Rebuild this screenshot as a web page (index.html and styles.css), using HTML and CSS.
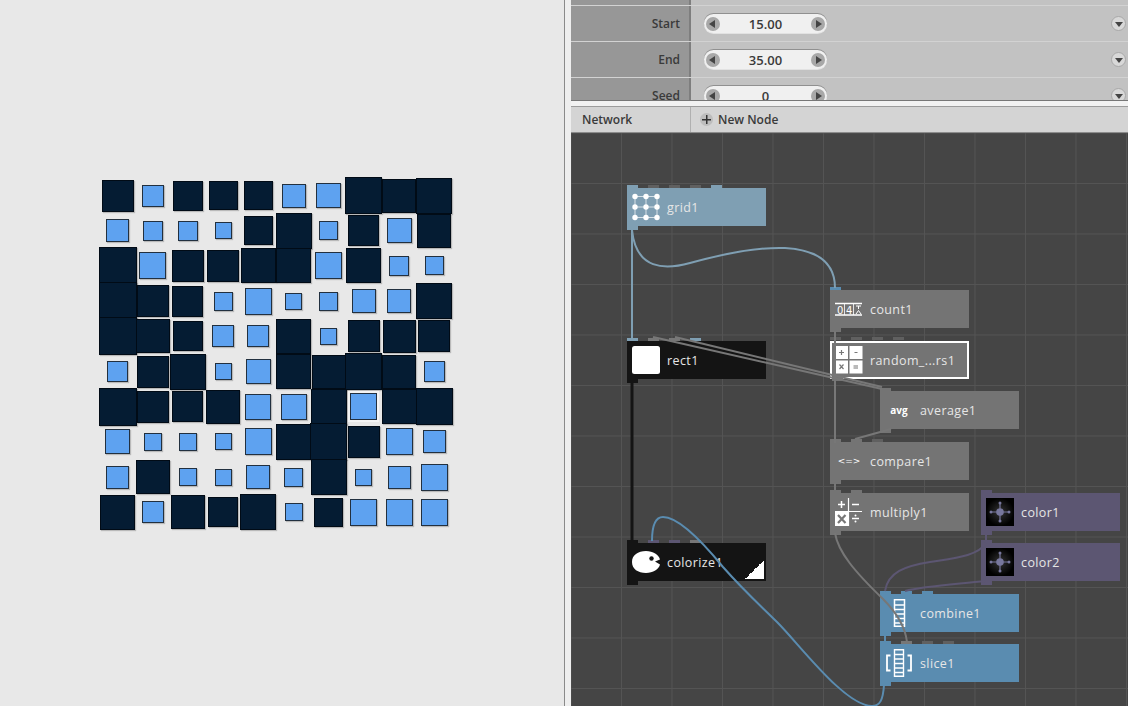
FILE: index.html
```html
<!DOCTYPE html>
<html lang="en">
<head>
    <meta charset="UTF-8">
    <title>NodeBox</title>
    <link rel="stylesheet" href="styles.css">
</head>
<body>

    <!-- Rendered output -->
    <div class="viewer">
        <div class="squares">
            <i class="sq dark" style="--s:32px"></i><i class="sq light" style="--s:22px"></i><i class="sq dark" style="--s:30px"></i><i class="sq dark" style="--s:29px"></i><i class="sq dark" style="--s:29px"></i><i class="sq light" style="--s:24px"></i><i class="sq light" style="--s:25px"></i><i class="sq dark" style="--s:37px"></i><i class="sq dark" style="--s:34px"></i><i class="sq dark" style="--s:36px"></i>
            <i class="sq light" style="--s:23px"></i><i class="sq light" style="--s:20px"></i><i class="sq light" style="--s:20px"></i><i class="sq light" style="--s:17px"></i><i class="sq dark" style="--s:29px"></i><i class="sq dark" style="--s:36px"></i><i class="sq light" style="--s:19px"></i><i class="sq dark" style="--s:31px"></i><i class="sq light" style="--s:25px"></i><i class="sq dark" style="--s:34px"></i>
            <i class="sq dark" style="--s:38px"></i><i class="sq light" style="--s:27px"></i><i class="sq dark" style="--s:32px"></i><i class="sq dark" style="--s:32px"></i><i class="sq dark" style="--s:35px"></i><i class="sq dark" style="--s:35px"></i><i class="sq light" style="--s:27px"></i><i class="sq dark" style="--s:35px"></i><i class="sq light" style="--s:20px"></i><i class="sq light" style="--s:19px"></i>
            <i class="sq dark" style="--s:38px"></i><i class="sq dark" style="--s:32px"></i><i class="sq dark" style="--s:31px"></i><i class="sq light" style="--s:19px"></i><i class="sq light" style="--s:27px"></i><i class="sq light" style="--s:17px"></i><i class="sq light" style="--s:19px"></i><i class="sq light" style="--s:24px"></i><i class="sq light" style="--s:24px"></i><i class="sq dark" style="--s:36px"></i>
            <i class="sq dark" style="--s:38px"></i><i class="sq dark" style="--s:34px"></i><i class="sq dark" style="--s:30px"></i><i class="sq light" style="--s:22px"></i><i class="sq light" style="--s:22px"></i><i class="sq dark" style="--s:35px"></i><i class="sq light" style="--s:17px"></i><i class="sq dark" style="--s:32px"></i><i class="sq dark" style="--s:33px"></i><i class="sq dark" style="--s:32px"></i>
            <i class="sq light" style="--s:21px"></i><i class="sq dark" style="--s:32px"></i><i class="sq dark" style="--s:36px"></i><i class="sq light" style="--s:17px"></i><i class="sq light" style="--s:25px"></i><i class="sq dark" style="--s:35px"></i><i class="sq dark" style="--s:34px"></i><i class="sq dark" style="--s:37px"></i><i class="sq dark" style="--s:34px"></i><i class="sq light" style="--s:21px"></i>
            <i class="sq dark" style="--s:38px"></i><i class="sq dark" style="--s:32px"></i><i class="sq dark" style="--s:31px"></i><i class="sq dark" style="--s:34px"></i><i class="sq light" style="--s:26px"></i><i class="sq light" style="--s:26px"></i><i class="sq dark" style="--s:36px"></i><i class="sq light halo" style="--s:27px"></i><i class="sq dark" style="--s:35px"></i><i class="sq dark" style="--s:37px"></i>
            <i class="sq light" style="--s:25px"></i><i class="sq light" style="--s:18px"></i><i class="sq light" style="--s:18px"></i><i class="sq light" style="--s:17px"></i><i class="sq light" style="--s:27px"></i><i class="sq dark" style="--s:36px"></i><i class="sq dark" style="--s:37px"></i><i class="sq dark" style="--s:32px"></i><i class="sq light" style="--s:27px"></i><i class="sq light" style="--s:23px"></i>
            <i class="sq light" style="--s:23px"></i><i class="sq dark" style="--s:34px"></i><i class="sq light" style="--s:18px"></i><i class="sq light" style="--s:17px"></i><i class="sq light" style="--s:24px"></i><i class="sq light" style="--s:19px"></i><i class="sq dark" style="--s:36px"></i><i class="sq light" style="--s:17px"></i><i class="sq light" style="--s:23px"></i><i class="sq light" style="--s:27px"></i>
            <i class="sq dark" style="--s:35px"></i><i class="sq light" style="--s:22px"></i><i class="sq dark" style="--s:34px"></i><i class="sq dark" style="--s:30px"></i><i class="sq dark" style="--s:36px"></i><i class="sq light" style="--s:18px"></i><i class="sq dark" style="--s:29px"></i><i class="sq light" style="--s:27px"></i><i class="sq light" style="--s:27px"></i><i class="sq light" style="--s:27px"></i>
        </div>
    </div>

    <div class="side">
        <!-- Parameters -->
        <div class="params">
            <div class="param-row">
                <div class="param-label">Amount</div>
                <div class="param-value"><span class="expand"></span></div>
            </div>
            <div class="param-row">
                <div class="param-label">Start</div>
                <div class="param-value">
                    <div class="stepper"><span class="arrow left"></span><span class="num">15.00</span><span class="arrow right"></span></div>
                    <span class="expand"></span>
                </div>
            </div>
            <div class="param-row">
                <div class="param-label">End</div>
                <div class="param-value">
                    <div class="stepper"><span class="arrow left"></span><span class="num">35.00</span><span class="arrow right"></span></div>
                    <span class="expand"></span>
                </div>
            </div>
            <div class="param-row">
                <div class="param-label">Seed</div>
                <div class="param-value">
                    <div class="stepper"><span class="arrow left"></span><span class="num">0</span><span class="arrow right"></span></div>
                    <span class="expand"></span>
                </div>
            </div>
        </div>

        <div class="splitter"></div>

        <div class="netbar">
            <div class="netbar-title">Network</div>
            <div class="netbar-new"><span class="plus"></span>New Node</div>
        </div>

        <!-- Network canvas -->
        <div class="network">

            <div class="node steel n-grid">
                <div class="ports"><b class="on"></b><b></b><b></b><b></b><b class="on"></b></div>
                <svg class="icon" viewBox="0 0 28 28">
                    <path d="M3 3.5H25M3 14H25M3 24.500H25M3 3.500V24.500M14 3.500V24.500M25 3.500V24.500" stroke="#fff" stroke-width=".7" fill="none"/>
                    <g fill="#fff">
                        <circle cx="3" cy="3.500" r="2.700"/><circle cx="14" cy="3.500" r="2.700"/><circle cx="25" cy="3.500" r="2.700"/>
                        <circle cx="3" cy="14" r="2.700"/><circle cx="14" cy="14" r="2.700"/><circle cx="25" cy="14" r="2.700"/>
                        <circle cx="3" cy="24.500" r="2.700"/><circle cx="14" cy="24.500" r="2.700"/><circle cx="25" cy="24.500" r="2.700"/>
                    </g>
                </svg>
                <span class="name">grid1</span>
            </div>

            <div class="node black n-rect">
                <div class="ports"><b class="steel-port"></b><b class="gray-port"></b><b class="gray-port"></b><b class="steel-port"></b></div>
                <svg class="icon" viewBox="0 0 28 28"><rect width="28" height="28" rx="2.500" fill="#fff"/></svg>
                <span class="name">rect1</span>
            </div>

            <div class="node gray n-count">
                <div class="ports"><b class="blue-port"></b></div>
                <svg class="icon" viewBox="0 0 28 28">
                    <path d="M0 8.500H27M0 20H27" stroke="#fff" stroke-width="1.500"/>
                    <path d="M9.500 9V20M18.500 9V20" stroke="#fff" stroke-width=".8"/>
                    <text class="icon-digit" x="2" y="18.500">0</text>
                    <text class="icon-digit" x="11" y="18.500">4</text>
                    <path d="M21 11H26M23.500 11V14M21 19L23.500 15.500L26 19" stroke="#fff" fill="none"/>
                </svg>
                <span class="name">count1</span>
            </div>

            <div class="node gray selected n-random">
                <div class="ports"><b></b><b></b><b></b><b></b></div>
                <svg class="icon" viewBox="0 0 28 28">
                    <rect x="0" y="0" width="13" height="13" fill="#fff"/><rect x="14.500" y="0" width="13" height="13" fill="#fff"/>
                    <rect x="0" y="14.500" width="13" height="13" fill="#fff"/><rect x="14.500" y="14.500" width="13" height="13" fill="#fff"/>
                    <path d="M4 6.500H9M6.500 4V9M19.500 6.500H22.500M4.500 18.500L8.500 23M8.500 18.500L4.500 23M18.500 20H23M18.500 22H23" stroke="#777" stroke-width="1.200"/>
                </svg>
                <span class="name">random_...rs1</span>
            </div>

            <div class="node gray n-average">
                <div class="ports"><b class="lit"></b></div>
                <span class="icon icon-text avg">avg</span>
                <span class="name">average1</span>
            </div>

            <div class="node gray n-compare">
                <div class="ports"><b class="lit"></b><b class="lit"></b><b></b></div>
                <span class="icon icon-text cmp">&lt;=&gt;</span>
                <span class="name">compare1</span>
            </div>

            <div class="node gray n-multiply">
                <div class="ports"><b class="lit"></b><b class="lit"></b></div>
                <svg class="icon" viewBox="0 0 28 28">
                    <rect x="0" y="14" width="13.500" height="14" fill="#fff"/>
                    <path d="M13.500 0V28M0 13.500H27" stroke="#fff" stroke-width="1.200"/>
                    <path d="M3 6.500H10M6.500 3V10M17 6.500H24M17 20.500H24" stroke="#fff" stroke-width="1.500"/>
                    <path d="M3 17L10.500 25M10.500 17L3 25" stroke="#777" stroke-width="2.200"/>
                    <circle cx="20.500" cy="17.500" r="1" fill="#fff"/><circle cx="20.500" cy="23.500" r="1" fill="#fff"/>
                </svg>
                <span class="name">multiply1</span>
            </div>

            <div class="node purple n-color1">
                <div class="ports"><b class="lit"></b></div>
                <svg class="icon" viewBox="0 0 28 28">
                    <use href="#colorIcon"/>
                </svg>
                <span class="name">color1</span>
            </div>

            <div class="node purple n-color2">
                <div class="ports"><b class="lit"></b></div>
                <svg class="icon" viewBox="0 0 28 28">
                    <use href="#colorIcon"/>
                </svg>
                <span class="name">color2</span>
            </div>

            <div class="node black n-colorize">
                <div class="ports"><b class="lit"></b><b class="purple-port"></b><b class="purple-port"></b><b class="gray-port"></b></div>
                <svg class="icon" viewBox="0 0 28 22">
                    <path d="M0 11C0 4 6 0 14 0C21 0 27 4 28 8.500L23 10.500L28 13.500C27 18 21 22 14 22C6 22 0 18 0 11Z" fill="#fff"/>
                    <circle cx="19.500" cy="7.500" r="2.200" fill="#141414"/>
                </svg>
                <span class="name">colorize1</span>
                <span class="corner"></span>
            </div>

            <div class="node blue n-combine">
                <div class="ports"><b class="lit"></b><b class="lit"></b><b class="lit"></b></div>
                <svg class="icon" viewBox="0 0 28 28">
                    <path d="M9.500 .8H19.500V27.200H9.500ZM9.500 6H19.500M9.500 10.500H19.500M9.500 15H19.500M9.500 19.500H19.500M9.500 24H19.500" stroke="#fff" stroke-width="1.500" fill="none"/>
                </svg>
                <span class="name">combine1</span>
            </div>

            <div class="node blue n-slice">
                <div class="ports"><b class="lit"></b><b class="gray-port"></b><b></b><b></b></div>
                <svg class="icon" viewBox="0 0 28 28">
                    <path d="M9.500 .8H18.500V27.200H9.500ZM9.500 5.500H18.500M9.500 10H18.500M9.500 14.500H18.500M9.500 19H18.500M9.500 23.500H18.500" stroke="#fff" stroke-width="1.400" fill="none"/>
                    <path d="M5.500 6.500H2V21.500H5.500M22.500 6.500H26V21.500H22.500" stroke="#fff" stroke-width="1.800" fill="none"/>
                </svg>
                <span class="name">slice1</span>
            </div>

            <!-- Wires, in page coordinates -->
            <svg class="wires" viewBox="571 133 557 573">
                <defs>
                    <radialGradient id="colorBg">
                        <stop offset="0" stop-color="#333"/>
                        <stop offset="1" stop-color="#000"/>
                    </radialGradient>
                    <g id="colorIcon">
                        <rect width="28" height="28" fill="url(#colorBg)"/>
                        <path d="M14 4V24M4 14H24" stroke="#77779c" stroke-width="1.200"/>
                        <circle cx="14" cy="14" r="3.800" fill="#77779c"/>
                        <circle cx="14" cy="5" r="1.500" fill="#77779c"/><circle cx="14" cy="23" r="1.500" fill="#77779c"/>
                        <circle cx="5" cy="14" r="1.500" fill="#77779c"/><circle cx="23" cy="14" r="1.500" fill="#77779c"/>
                    </g>
                </defs>
                <g fill="none" stroke-width="2">
                    <path stroke="#7f9fb3" d="M632 230V338"/>
                    <path stroke="#7f9fb3" d="M632 230C636 270 665 270 690 263C730 252 760 247 785 248C820 250 835 265 835 288"/>
                    <path stroke="#141414" stroke-width="3" d="M632 382V541"/>
                    <path stroke="#777" d="M835 331V443M835 483V490"/>
                    <path stroke="#777" d="M653 337L882 389"/>
                    <path stroke="#777" d="M675 337L882 387"/>
                    <path stroke="#777" d="M891 429L855 439"/>
                    <path stroke="#777" d="M835 533C838 552 855 572 883 599C896 612 905 625 907 642"/>
                    <path stroke="#5c5672" d="M986 534V543"/>
                    <path stroke="#5c5672" d="M885 591C888 572 905 566 930 562C955 558 978 556 986 543"/>
                    <path stroke="#5c5672" d="M905 591C925 586 960 584 985 581"/>
                    <path stroke="#5a8cb0" d="M885 634V645"/>
                    <path stroke="#5a8cb0" d="M652 541C652 525 655 517 663 517C680 517 705 545 723 567C745 592 760 605 777 622C800 645 845 706 872 706C880 706 883 700 884 685"/>
                </g>
            </svg>
        </div>
    </div>

</body>
</html>
```

FILE: styles.css
```css
body {
    margin: 0;
    width: 1128px;
    height: 706px;
    display: flex;
    overflow: hidden;
    background-color: #e8e8e8;
    font-family: "Open Sans", sans-serif;
}

/* left: rendered squares */
.viewer {
    width: 565px;
    height: 706px;
    padding: 178px 0 0 100px;
    box-sizing: border-box;
    background-color: #e8e8e8;
    border-right: 1px solid #8a8a8a;
    flex: none;
}
.squares {
    display: grid;
    grid-template-columns: repeat(10, 35.2px);
    grid-auto-rows: 35.2px;
    justify-items: center;
    align-items: center;
}
.sq {
    display: block;
    width: var(--s);
    height: var(--s);
    box-sizing: border-box;
    box-shadow: 1px 1px 1px rgba(0, 0, 0, 0.2);
}
.sq.dark {
    background-color: #051c33;
    border: 1px solid #010b16;
}
.sq.light {
    background-color: #5ea2f0;
    border: 1.5px solid #22303f;
}
.sq.halo {
    box-shadow: 0 0 0 2px #f4f4f4;
}

/* right side */
.side {
    flex: 1;
    display: flex;
    flex-direction: column;
    padding-left: 6px;
    background-color: #eeeeee;
    min-width: 0;
}
.params {
    height: 100px;
    overflow: hidden;
    flex: none;
    border-bottom: 1px solid #777;
}
.param-row {
    display: flex;
    height: 36px;
    border-bottom: 1px solid #d2d2d2;
    box-sizing: border-box;
}
.param-row:first-child {
    margin-top: -30px;
}
.param-label {
    width: 120px;
    box-sizing: border-box;
    padding: 9px 9px 0 0;
    text-align: right;
    font-size: 12px;
    font-weight: 600;
    color: #3a3a3a;
    background-color: #979797;
    border-right: 2px solid #7e7e7e;
    flex: none;
}
.param-value {
    flex: 1;
    display: flex;
    align-items: center;
    justify-content: space-between;
    padding: 0 1px 0 13px;
    background-color: #c2c2c2;
}
.stepper {
    width: 123px;
    height: 19px;
    display: flex;
    align-items: center;
    justify-content: space-between;
    padding: 0 2px;
    box-sizing: border-box;
    border-radius: 10px;
    background-color: #f0f0f0;
    box-shadow: 0 -1px 0 #909090, 0 1px 0 #e2e2e2;
}
.num {
    font-size: 13px;
    font-weight: 600;
    color: #3a3a3a;
}
.arrow {
    width: 14px;
    height: 14px;
    border-radius: 50%;
    background-color: #a8a8a8;
    position: relative;
}
.arrow::after {
    content: "";
    position: absolute;
    top: 3px;
    border-top: 4px solid transparent;
    border-bottom: 4px solid transparent;
}
.arrow.left::after {
    left: 3px;
    border-right: 6px solid #444;
}
.arrow.right::after {
    left: 5px;
    border-left: 6px solid #444;
}
.expand {
    width: 15px;
    height: 15px;
    border-radius: 50%;
    background-color: #d8d8d8;
    border: 1px solid #a8a8a8;
    box-sizing: border-box;
    position: relative;
    margin-right: 1px;
    flex: none;
}
.expand::after {
    content: "";
    position: absolute;
    left: 2.500px;
    top: 5px;
    border-left: 4px solid transparent;
    border-right: 4px solid transparent;
    border-top: 5px solid #444;
}
.splitter {
    height: 5px;
    background-color: #f2f2f2;
    border-bottom: 1px solid #9c9c9c;
    flex: none;
}
.netbar {
    height: 25px;
    display: flex;
    align-items: center;
    font-size: 12px;
    font-weight: 600;
    color: #3a3a3a;
    background-color: #d4d4d4;
    border-bottom: 1px solid #8c8c8c;
    flex: none;
}
.netbar-title {
    width: 120px;
    padding-left: 11px;
    box-sizing: border-box;
    border-right: 1px solid #b0b0b0;
    line-height: 25px;
    height: 25px;
}
.netbar-new {
    display: flex;
    align-items: center;
    padding-left: 9px;
}
.plus {
    width: 13px;
    height: 13px;
    border-radius: 50%;
    margin-right: 5px;
    background:
        linear-gradient(#333, #333) center / 9px 1.500px no-repeat,
        linear-gradient(#333, #333) center / 1.500px 9px no-repeat,
        #bdbdbd;
}

/* network canvas */
.network {
    flex: 1;
    position: relative;
    overflow: hidden;
    background-color: #454545;
    background-image:
        linear-gradient(to right, #545454 1px, transparent 1px),
        linear-gradient(to bottom, #545454 1px, transparent 1px);
    background-size: 50.500px 50.500px;
    background-position: 50px 50px;
}
.wires {
    position: absolute;
    left: 0;
    top: 0;
    width: 557px;
    height: 573px;
    pointer-events: none;
}
.node {
    position: absolute;
    width: 139px;
    height: 38px;
    display: flex;
    align-items: center;
    box-sizing: border-box;
    padding-left: 5px;
    --tint: #747474;
    background-color: var(--tint);
}
.node::after {
    content: "";
    position: absolute;
    left: 0;
    bottom: -4px;
    width: 11px;
    height: 4px;
    background-color: var(--tint);
}
.steel { --tint: #7f9fb3; }
.black { --tint: #141414; }
.gray { --tint: #747474; }
.purple { --tint: #5c5672; }
.blue { --tint: #5a8cb0; }
.selected {
    border: 2px solid #fff;
    padding-left: 3px;
}
.ports {
    position: absolute;
    left: 0;
    top: -3px;
    display: flex;
    gap: 10px;
}
.selected .ports {
    left: -2px;
    top: -6px;
}
.ports b {
    display: block;
    width: 11px;
    height: 3px;
    background-color: #606060;
}
.ports .lit { background-color: var(--tint); }
.ports .on { background-color: var(--tint); }
.ports .steel-port { background-color: #7f9fb3; }
.ports .gray-port { background-color: #777; }
.ports .blue-port { background-color: #5a8cb0; }
.ports .purple-port { background-color: #5c5672; }
.icon {
    width: 28px;
    height: 28px;
    flex: none;
}
.icon-text {
    display: flex;
    align-items: center;
    justify-content: center;
    color: #fff;
}
.icon-text.avg {
    font-size: 10px;
    font-weight: 700;
}
.icon-text.cmp {
    font-family: "DejaVu Sans", sans-serif;
    font-size: 9px;
}
.icon-digit {
    font-family: "DejaVu Sans", sans-serif;
    font-size: 10px;
    fill: #fff;
}
.name {
    margin-left: 7px;
    font-size: 12.500px;
    letter-spacing: 0.4px;
    color: #e6e6e6;
}
.corner {
    position: absolute;
    right: 2px;
    bottom: 2px;
    width: 19px;
    height: 19px;
    background: linear-gradient(to bottom right, transparent 50%, #fff 50%);
}

/* node places on the canvas */
.n-grid { left: 56px; top: 55px; }
.n-rect { left: 56px; top: 208px; }
.n-count { left: 259px; top: 157px; }
.n-random { left: 259px; top: 208px; }
.n-average { left: 309px; top: 258px; }
.n-compare { left: 259px; top: 309px; }
.n-multiply { left: 259px; top: 360px; }
.n-color1 { left: 410px; top: 360px; }
.n-color2 { left: 410px; top: 410px; }
.n-colorize { left: 56px; top: 410px; }
.n-combine { left: 309px; top: 461px; }
.n-slice { left: 309px; top: 511px; }
```
